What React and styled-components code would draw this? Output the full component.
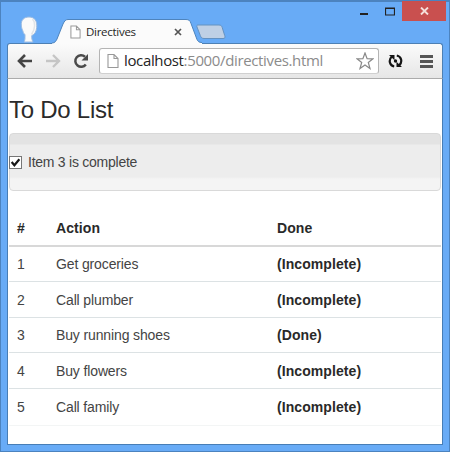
import React from "react";
import styled, { createGlobalStyle } from "styled-components";

const Global = createGlobalStyle`
  * { box-sizing: border-box; }
  body { margin: 0; overflow: hidden; font-family: "Liberation Sans", Arial, sans-serif; font-size: 14px; color: #333; }
  svg { display: block; flex: none; }
`;
const Frame = styled.div`
  width: 450px; height: 452px; display: flex; flex-direction: column;
  padding: 0 6px 6px; background: #68abf6;
  border: 1px solid #4c83bf; border-top-width: 2px;
`;
const TitleBar = styled.header`
  height: 41px; flex: none; display: flex; align-items: flex-start;
`;
const Avatar = styled.svg`margin: 14px 0 0 12px;`;
const Tab = styled.div`
  width: 151px; height: 42px; margin-left: 13px; padding-top: 17px;
  display: grid; z-index: 1;
`;
const TabShape = styled.svg`grid-area: 1 / 1;`;
const TabContent = styled.div`
  grid-area: 1 / 1; display: flex; align-items: center; height: 25px; padding: 0 21px 0 18px;
`;
const TabTitle = styled.span`
  flex: 1; margin-left: 5px; font: 11.5px/16px "Open Sans", sans-serif; letter-spacing: -0.28px; color: #252525;
`;
const NewTab = styled.svg`margin: 22px 0 0 -8px;`;
const Controls = styled.div`
  margin: -1px -3px 0 auto; display: flex; align-items: center; height: 20px;
`;
const Control = styled.span`
  width: ${(p) => p.$width}px; height: 20px; display: grid; place-items: center;
  background: ${(p) => (p.$danger ? "#c9504f" : "transparent")};
  margin-left: ${(p) => (p.$danger ? -1 : 0)}px;
`;
const Toolbar = styled.nav`
  height: 35px; flex: none; display: flex; align-items: center; padding: 0 9px 0 9px;
  background: linear-gradient(#fbfbfb, #e6e6e6); border: solid #4d80b4; border-width: 1px 1px 0;
  border-radius: 3px 3px 0 0;
`;
const NavIcon = styled.svg`margin-right: ${(p) => p.$gap || 0}px;`;
const Address = styled.div`
  width: 280px; height: 26px; display: flex; align-items: center; padding: 0 4px 0 7px;
  background: #fff; border: 1px solid #b4b4b4; border-bottom-color: #d0d0d0; border-radius: 3px; margin-right: 9px;
`;
const Url = styled.span`
  flex: 1; margin-left: 5px; padding-bottom: 2px; white-space: nowrap; font: 15px/22px "Open Sans", sans-serif;
  letter-spacing: -0.36px; color: #8b8b8b;
  b { font-weight: 400; color: #242424; }
`;
const Page = styled.main`
  flex: 1; min-height: 0; background: #fff; padding: 16px 1px 0 1px;
  border: 1px solid #477db5; border-top-color: #ababab;
`;
const Heading = styled.h1`
  margin: 0; font-size: 24px; line-height: 30px; font-weight: 400; color: #2b2b2b; letter-spacing: -0.25px;
`;
const Well = styled.label`
  height: 58px; margin-top: 8px; display: flex; align-items: center; letter-spacing: -0.25px;
  border: 1px solid #d9d9d9; border-radius: 4px; color: #444;
  background: linear-gradient(#e3e3e3 0 10px, #ededed 11px 43px, #f4f4f4 45px);
`;
const Check = styled.span`
  width: 13px; height: 13px; margin: 1px 6px 0 -1px; border: 1px solid #777; background: #fff;
  display: grid; place-items: center;
`;
const Table = styled.table`
  width: 100%; margin-top: 19px; border-collapse: separate; border-spacing: 0; table-layout: fixed;
  border-bottom: 1px solid #f3f5f5;
`;
const Col = styled.col`width: ${(p) => p.$width}px;`;
const Cell = styled.td`
  height: ${(p) => p.$height}px; padding: 0 8px; text-align: left; white-space: nowrap;
  font-weight: ${(p) => (p.$strong ? 700 : 400)}; color: ${(p) => (p.$strong ? "#292929" : "#444")};
  letter-spacing: ${(p) => (p.$strong ? 0.08 : -0.13)}px;
  border-top: ${(p) => (p.$first ? "2px solid #d8d8d8" : p.$head ? "0" : "1px solid #dce2e4")};
`;

const todos = [
  ["Get groceries", false, 36], ["Call plumber", false, 36], ["Buy running shoes", true, 35],
  ["Buy flowers", false, 36], ["Call family", false, 37],
];

const PageIcon = ({ w, h }) => (
  <svg width={w} height={h} viewBox="0 0 12 15" fill="#fff" stroke="#999" strokeWidth="1.1">
    <path d="M1 1h6l4 4v9H1zM7 1v4h4" />
  </svg>
);

export default function App() {
  return (
    <>
      <Global />
      <Frame>
        <TitleBar>
          <Avatar width="20" height="27" viewBox="0 0 20 27">
            <path d="M10 1C5 1 2 4 2.300 9c.1 3 .9 4 1.600 6 .5 2 .8 3 2.100 3.400v3.200C6 24 5.500 25 5 26h9c-1-2-1.500-4-1.200-6.500 3-1 4.500-4.200 4.900-8C18.400 5 15.500 1 10 1z" fill="#fafafa" stroke="#9abbe2" />
            <path d="M13.500 3c3 3 3 10-1 15.500" fill="none" stroke="#e1e4e7" strokeWidth="1.500" />
          </Avatar>
          <Tab>
            <TabShape width="151" height="25" viewBox="0 0 151 25">
              <path d="M0 25V24c3 0 4-2 5-4L11 5c1.500-3 2.500-4.500 5-4.500h118c3 0 4 1 5 4l6 16c1 2 2 3 5 3.500v1z" fill="#fbfbfb" />
              <path d="M0 24c3 0 4-2 5-4L11 5c1.500-3 2.500-4.500 5-4.500h118c3 0 4 1 5 4l6 16c1 2 2 3 5 3" fill="none" stroke="#4e84bd" />
            </TabShape>
            <TabContent>
              <PageIcon w={11} h={14} />
              <TabTitle>Directives</TabTitle>
              <svg width="8" height="8" viewBox="0 0 8 8" stroke="#555" strokeWidth="1.700"><path d="M1 1l6 6M7 1L1 7" /></svg>
            </TabContent>
          </Tab>
          <NewTab width="31" height="17" viewBox="0 0 31 17">
            <path d="M3 1h21c2 0 2.700 1 3.200 2.500l2.500 8c.7 2 .3 3-1.700 3H9c-2 0-3-1-3.700-3L2 3C1.500 1.700 2 1 3 1z" fill="#bfd0e5" stroke="#6592c1" />
          </NewTab>
          <Controls>
            <Control $width={26}><svg width="8" height="14"><path d="M0 9h8v2H0z" fill="#222" /></svg></Control>
            <Control $width={26}><svg width="10" height="9"><path d="M.5 1h9v7h-9zM.5 1.500h9" fill="none" stroke="#222" strokeWidth="1.200" /></svg></Control>
            <Control $width={44} $danger><svg width="9" height="8" viewBox="0 0 9 8"><path d="M1 .5l7 7M8 .5l-7 7" stroke="#f5dfda" strokeWidth="1.900" /></svg></Control>
          </Controls>
        </TitleBar>
        <Toolbar>
          <NavIcon $gap={12} width="16" height="14" viewBox="0 0 16 14" fill="none" stroke="#444" strokeWidth="2.600"><path d="M15 7H2.500M8 1L2 7l6 6" /></NavIcon>
          <NavIcon $gap={12} width="16" height="14" viewBox="0 0 16 14" fill="none" stroke="#c5c5c5" strokeWidth="2.300"><path d="M1 7h12.500M8 1l6 6-6 6" /></NavIcon>
          <NavIcon $gap={10} width="16" height="16" viewBox="0 0 16 16"><path d="M12.800 11.500A5.800 5.800 0 1 1 12 3.700" fill="none" stroke="#4a4a4a" strokeWidth="2.500" /><path d="M15 1v6.500H8.500z" fill="#4a4a4a" /></NavIcon>
          <Address>
            <PageIcon w={12} h={16} />
            <Url><b>localhost</b>:5000/directives.html</Url>
            <svg width="18" height="18" viewBox="0 0 18 18" fill="#fff" stroke="#888" strokeWidth="1.200"><path d="M9 1l2.100 5.600 5.900.2-4.700 3.600L14 16.500l-5-3.400-5 3.400 1.700-6.100L1 6.800l5.900-.2z" /></svg>
          </Address>
          <NavIcon $gap={17} width="15" height="16" viewBox="0 0 15 16" fill="none" stroke="#151515" strokeWidth="2.200">
            <path d="M6.200 13.500C1.500 12.500.3 7 3.700 3.800M8.800 2.500C13.500 3.500 14.700 9 11.300 12.200" />
            <path d="M1 2h5.500v5.200zM14 14H8.500V8.800z" fill="#151515" stroke="none" />
            <circle cx="7.500" cy="8" r="1.700" fill="#151515" stroke="none" />
          </NavIcon>
          <NavIcon width="13" height="13" viewBox="0 0 13 13" fill="#555"><path d="M0 0h13v3H0zM0 5h13v3H0zM0 10h13v3H0z" /></NavIcon>
        </Toolbar>
        <Page>
          <Heading>To Do List</Heading>
          <Well>
            <Check><svg width="11" height="11" viewBox="0 0 10 10"><path d="M1.500 4.500L4 7.500 8.500 2" fill="none" stroke="#181818" strokeWidth="2" /></svg></Check>
            Item 3 is complete
          </Well>
          <Table>
            <colgroup><Col $width={39} /><Col $width={221} /><Col /></colgroup>
            <thead><tr>{["#", "Action", "Done"].map((t) => <Cell as="th" key={t} $head $height={35} $strong>{t}</Cell>)}</tr></thead>
            <tbody>
              {todos.map(([name, done, height], i) => (
                <tr key={name}>
                  <Cell $height={height} $first={i === 0}>{i + 1}</Cell>
                  <Cell $height={height} $first={i === 0}>{name}</Cell>
                  <Cell $height={height} $first={i === 0} $strong>{done ? "(Done)" : "(Incomplete)"}</Cell>
                </tr>
              ))}
            </tbody>
          </Table>
        </Page>
      </Frame>
    </>
  );
}
